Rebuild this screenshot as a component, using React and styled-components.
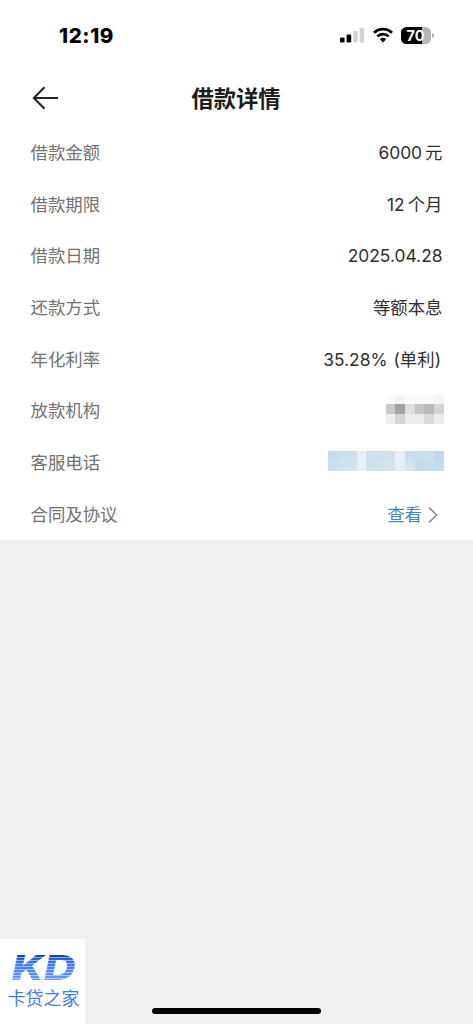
import React from "react";
import styled, { createGlobalStyle } from "styled-components";

const GlobalStyle = createGlobalStyle`
  * {
    box-sizing: border-box;
  }
  body {
    margin: 0;
    background: #f1f1f1;
    font-family: Inter, "Noto Sans CJK SC", sans-serif;
  }
`;

const lenderCells = [
  "#fbfbfb", "#f5f5f5", "#fbfbfb", "#fafafa", "#fafafa", "#f4f4f4",
  "#c9c9c9", "#a3a3a3", "#dedede", "#c4c4c4", "#b9b9b9", "#d5d5d5",
  "#eeeeee", "#d5d5d5", "#ebebeb", "#ebebeb", "#dadada", "#ececec",
];

const phoneCells = [
  "#c9dcea", "#cbdeeb", "#cfe0ed", "#e6eef6", "#d0e1ee", "#d0e1ee",
  "#d2e1ec", "#e8f0f5", "#c9dded", "#c9ddeb", "#cddfea", "#c2d8e7",
  "#cadfee", "#d0e1ee", "#d2e1ed", "#e6eff7", "#d0e1ec", "#d3e1ed",
  "#d3e2ed", "#e4edf4", "#d3e3f1", "#c5dbea", "#c8dcea", "#c7dcec",
];

const rows = [
  { label: "借款金额", value: "6000", unit: "元" },
  { label: "借款期限", value: "12", unit: "个月" },
  { label: "借款日期", value: "2025.04.28" },
  { label: "还款方式", value: "等额本息" },
  { label: "年化利率", value: "35.28%", note: "(单利)" },
  { label: "放款机构", cells: lenderCells, cols: 6 },
  { label: "客服电话", cells: phoneCells, cols: 12 },
  { label: "合同及协议", link: "查看" },
];

const StatusIcons = () => (
  <Icons>
    <svg width="25" height="16" viewBox="0 0 25 16">
      <rect x="0" y="10.5" width="4.6" height="5" rx="1.2" fill="#000" />
      <rect x="6.6" y="7.5" width="4.6" height="8" rx="1.2" fill="#000" />
      <rect x="13.2" y="4" width="4.6" height="11.5" rx="1.2" fill="#d2d2d2" />
      <rect x="19.6" y="0.7" width="4.6" height="14.8" rx="1.2" fill="#d2d2d2" />
    </svg>
    <svg width="20" height="16" viewBox="0 0 20 16">
      <g fill="none" stroke="#000" strokeWidth="2.7">
        <path d="M1 5.8a12.7 12.7 0 0 1 18 0" />
        <path d="M4.4 9.4a7.9 7.9 0 0 1 11.2 0" />
      </g>
      <path d="M10 15.4 6.9 12.2a4.5 4.5 0 0 1 6.2 0z" fill="#000" />
    </svg>
    <Battery>
      <Charge>70</Charge>
      <Tip />
    </Battery>
  </Icons>
);

const Row = ({ row }) => {
  const { label, value, unit, note, cells, cols, link } = row;

  return (
    <Item>
      <Label>{label}</Label>
      {value && (
        <Value $shift={note ? 1.5 : 0}>
          {value}
          {unit && <Unit>{unit}</Unit>}
          {note && <Note>{note}</Note>}
        </Value>
      )}
      {cells && (
        <Mosaic $cols={cols}>
          {cells.map((color, i) => (
            <Cell key={i} $color={color} />
          ))}
        </Mosaic>
      )}
      {link && (
        <Link href="#">
          {link}
          <svg width="10" height="18" viewBox="0 0 10 18">
            <path
              d="M1 1.5 8.5 9 1 16.5"
              fill="none"
              stroke="#858585"
              strokeWidth="1.5"
            />
          </svg>
        </Link>
      )}
    </Item>
  );
};

const Watermark = () => (
  <Mark>
    <svg width="85" height="46" viewBox="0 0 85 46">
      <defs>
        <linearGradient id="blue" x1="0" y1="16" x2="0" y2="41" gradientUnits="userSpaceOnUse">
          <stop offset="0" stopColor="#173f92" />
          <stop offset="0.2" stopColor="#2f6fe0" />
          <stop offset="0.6" stopColor="#4a86f5" />
          <stop offset="1" stopColor="#6a9dfa" />
        </linearGradient>
        <pattern id="lines" width="85" height="3" patternUnits="userSpaceOnUse">
          <rect width="85" height="1" fill="#fff" fillOpacity="0.5" />
        </pattern>
      </defs>
      <Letters x="11.5" y="41" textLength="64" lengthAdjust="spacingAndGlyphs" fill="url(#blue)">
        KD
      </Letters>
      <rect width="85" height="46" fill="url(#lines)" />
    </svg>
    <MarkName>卡贷之家</MarkName>
  </Mark>
);

export default function App() {
  return (
    <>
      <GlobalStyle />
      <Screen>
        <Panel>
          <StatusBar>
            <Time>12:19</Time>
            <StatusIcons />
          </StatusBar>
          <Header>
            <Back aria-label="返回">
              <svg width="27" height="24" viewBox="0 0 27 24">
                <path
                  d="M12.5 1.2 1.8 12l10.7 10.8M1.8 12H26"
                  fill="none"
                  stroke="#262626"
                  strokeWidth="2.1"
                />
              </svg>
            </Back>
            <Title>借款详情</Title>
          </Header>
          <List>
            {rows.map((row) => (
              <Row key={row.label} row={row} />
            ))}
          </List>
        </Panel>
        <Footer>
          <Watermark />
          <HomeBar />
        </Footer>
      </Screen>
    </>
  );
}

const Screen = styled.div`
  display: flex;
  flex-direction: column;
  justify-content: space-between;
  width: 473px;
  height: 1024px;
  background: #f1f1f1;
`;

const Panel = styled.div`
  height: 540px;
  background: #fff;
`;

const StatusBar = styled.div`
  display: flex;
  align-items: center;
  justify-content: space-between;
  height: 70px;
  padding: 0 39.5px 0 59px;
`;

const Time = styled.span`
  font-size: 20.5px;
  font-weight: 800;
  letter-spacing: 0.6px;
  color: #000;
`;

const Icons = styled.div`
  display: flex;
  align-items: center;
  gap: 8px;
`;

const Battery = styled.div`
  display: flex;
  align-items: center;
  gap: 1px;
`;

const Charge = styled.span`
  width: 30px;
  height: 17px;
  border-radius: 5.5px;
  background: linear-gradient(to right, #000 70%, #b5b5b5 70%);
  font-size: 14.5px;
  font-weight: 700;
  line-height: 17px;
  text-align: center;
  color: #fff;
`;

const Tip = styled.span`
  width: 2px;
  height: 5px;
  border-radius: 0 2px 2px 0;
  background: #b5b5b5;
`;

const Header = styled.header`
  display: grid;
  grid-template-columns: 80px 1fr 81px;
  align-items: center;
  height: 57px;
`;

const Back = styled.button`
  display: flex;
  padding: 0 0 1px 32px;
  border: none;
  background: none;
`;

const Title = styled.h1`
  margin: 0;
  padding-top: 1px;
  font-size: 22.3px;
  font-weight: 700;
  line-height: 30px;
  text-align: center;
  color: #1d1d1d;
`;

const List = styled.div`
  display: grid;
  grid-auto-rows: 51.7px;
`;

const Item = styled.div`
  display: flex;
  align-items: center;
  justify-content: space-between;
  padding: 0 30.5px;
  font-size: 17.4px;
  line-height: 26px;
`;

const Label = styled.span`
  color: #737373;
`;

const Value = styled.span`
  display: flex;
  margin-right: ${({ $shift }) => $shift}px;
  color: #303030;
`;

const Unit = styled.span`
  margin-left: 3px;
`;

const Note = styled.span`
  margin-left: 6px;
`;

const Mosaic = styled.div`
  display: grid;
  grid-template-columns: repeat(${({ $cols }) => $cols}, 9.67px);
  grid-auto-rows: 9.67px;
  margin-top: -4px;
  margin-right: -1px;
`;

const Cell = styled.span`
  background: ${({ $color }) => $color};
`;

const Link = styled.a`
  display: flex;
  align-items: center;
  gap: 6px;
  margin-right: 4.5px;
  color: #4588b5;
  text-decoration: none;
`;

const Footer = styled.footer`
  display: grid;
  grid-template-columns: 85px 1fr 85px;
  align-items: end;
`;

const Mark = styled.div`
  display: flex;
  flex-direction: column;
  align-items: center;
  height: 85px;
  background: #fff;
`;

const Letters = styled.text`
  font-family: Inter, sans-serif;
  font-size: 34px;
  font-style: italic;
  font-weight: 800;
`;

const MarkName = styled.span`
  padding-left: 2px;
  font-size: 17.9px;
  line-height: 28px;
  color: #3f7be8;
`;

const HomeBar = styled.div`
  justify-self: center;
  width: 169px;
  height: 6px;
  margin-bottom: 10px;
  border-radius: 3px;
  background: #000;
`;
